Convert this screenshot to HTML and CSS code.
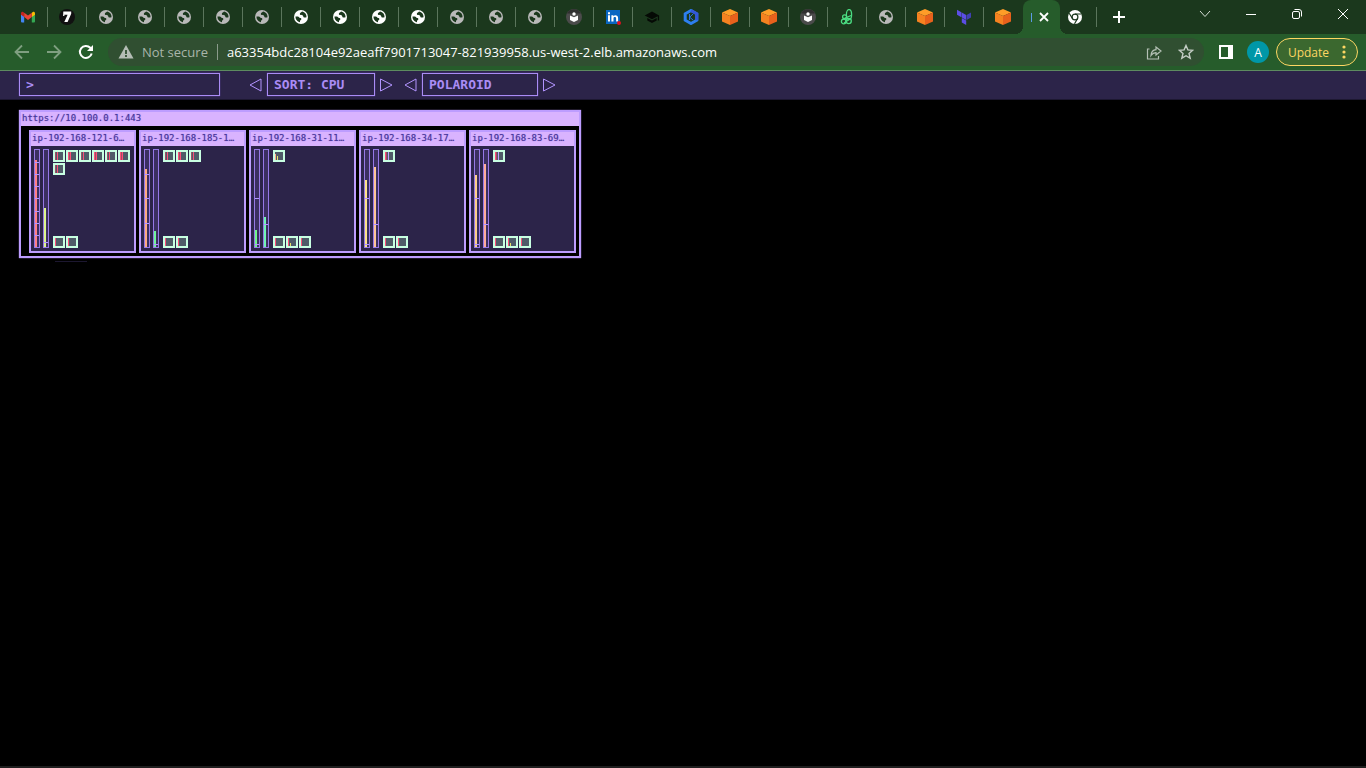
FILE: index.html
```html
<!DOCTYPE html>
<html lang="en">
<head>
<meta charset="utf-8">
<title>Kubernetes Operational View</title>
<link rel="stylesheet" href="styles.css">
</head>
<body>
<svg class="defs" aria-hidden="true">
  <symbol id="globe" viewBox="0 0 14 14"><circle cx="7" cy="7" r="7" fill="currentColor"/><path d="M1.500 6.600h2.200c1.400 0 1.500 1.500 2.300 1.500.9 0 1.500.4 1.300 1.300-.3.700-1.300.6-1.300 1.600v1.300C3.500 11.900 1.400 9.700 1.500 6.600zM8 1.600c-.2 1-2.200.9-2.200 2.300 0 1.200 1.700.8 2.700 1.300 1 .6.500 2 1.700 2.300 1 .3 1.300-.3 2.300-.3C12.700 4.300 10.700 2 8 1.600z" class="strip-fill"/></symbol>
  <symbol id="gmail" viewBox="0 0 14 11"><path d="M0 1.500V10q0 1 1 1h2.200V4.600z" fill="#4285f4"/><path d="M14 1.500V10q0 1-1 1h-2.200V4.600z" fill="#34a853"/><path d="M10.800 1.200 12.200.3Q14-.3 14 2v1.200l-3.200 2.400z" fill="#fbbc04"/><path d="M3.200 1.200 1.800.3Q0-.3 0 2v1.200l3.200 2.400z" fill="#c5221f"/><path d="M3.200 1.200 7 4.100l3.800-2.900v4.400L7 8.500 3.200 5.600z" fill="#ea4335"/></symbol>
  <symbol id="seven" viewBox="0 0 16 16"><circle cx="8" cy="8" r="8" fill="#111"/><path d="M4.300 2.500h7.900v2.200L8.600 13H5.300l3.300-7.300H5.400V7H4.100z" fill="#fff"/></symbol>
  <symbol id="reader" viewBox="0 0 16 16"><circle cx="8" cy="8" r="8" fill="#4b4b4b"/><path d="M1 4.500a8 8 0 0 1 14 0z" fill="#303030"/><circle cx="8" cy="5" r="1.700" fill="#fff"/><path d="M4 6.500 8 8.200l4-1.700V11l-4 2-4-2z" fill="#fff"/></symbol>
  <symbol id="linkedin" viewBox="0 0 16 16"><path d="M1 1h14v14H1z" fill="#0a66c2"/><path d="M3 6.300h2v6.200H3zM3 3.300h2v1.900H3zM6.400 6.300h2v.9c1.200-1.700 4.700-1.400 4.700 1.700v3.600h-2V9.400c0-2-2.600-1.900-2.600 0v3.100H6.400z" fill="#fff"/><circle cx="14" cy="14" r="2" fill="#e01020"/></symbol>
  <symbol id="cap" viewBox="0 0 16 16"><path d="M8 2.500.7 6.400 8 10.300l5.800-3.100v4.200h1.300v-5zM3.300 9v2.500L8 14l4.700-2.500V9L8 11.500z" fill="#050a05"/></symbol>
  <symbol id="kube" viewBox="0 0 16 16"><path d="m8 1.500 5.800 3.300v6.400L8 14.500l-5.800-3.300V4.800z" fill="none" stroke="#2d7ff0" stroke-width="3"/><path d="m8 1.500 5.800 3.300v6.400" fill="none" stroke="#3457d8" stroke-width="3"/><path d="M6.500 5v6M10 5 6.700 8.200 10 11" fill="none" stroke="#2d70e8"/></symbol>
  <symbol id="cube" viewBox="0 0 16 16"><path d="m8 0 8 3.500L8 7 0 3.500z" fill="#ff9d28"/><path d="M0 3.500 8 7v9l-8-3.500z" fill="#f58220"/><path d="M16 3.500 8 7v9l8-3.500z" fill="#e8611c"/></symbol>
  <symbol id="loops" viewBox="0 0 16 16"><g fill="none" stroke="#4bdc82" stroke-width="1.300"><ellipse cx="10" cy="5.600" rx="2.600" ry="5"/><circle cx="5.600" cy="7.800" r="2"/><circle cx="4.700" cy="12.500" r="2.300"/><circle cx="9.700" cy="12" r="2.600"/><path d="m4 10 8-3.500M5 14l6-4"/></g></symbol>
  <symbol id="terraform" viewBox="0 0 16 16"><path d="m1 .8 4.400 2.500v5L1 5.800zM5.800 3.600l4.400 2.500v5L5.800 8.600zM5.800 9.100l4.400 2.500v4.400l-4.400-2.500z" fill="#5c4ee5"/><path d="M15 3.600v5l-4.400 2.500v-5z" fill="#4040b2"/></symbol>
  <symbol id="chrome" viewBox="0 0 14 14"><circle cx="7" cy="7" r="7" fill="#fff"/><circle cx="7" cy="7" r="2.900" fill="none" stroke="#1b381d" stroke-width="1.200"/><path d="M7 4h6.300M4.400 8.500 1.200 3.300M9.600 8.500 6.500 13.800" stroke="#1b381d" stroke-width="1.200"/></symbol>
</svg>

<header class="browser">
  <nav class="tab-strip" id="tabs" aria-label="Tabs">
    <div class="tabs" id="tab-list"></div>
    <div class="active-tab"><span class="page-icon"></span><button aria-label="Close tab"><svg width="10" height="10" viewBox="0 0 10 10"><path d="m1 1 8 8M9 1 1 9" stroke="#fff" stroke-width="1.800"/></svg></button></div>
    <button class="tab last" aria-label="Chrome"><svg width="14" height="14"><use href="#chrome"/></svg></button>
    <button class="new-tab" aria-label="New tab"><svg width="12" height="12" viewBox="0 0 12 12"><path d="M6 0v12M0 6h12" stroke="#fff" stroke-width="2"/></svg></button>
    <div class="window-controls">
      <button aria-label="Search tabs"><svg width="12" height="12" viewBox="0 0 12 12"><path d="m1 3 5 5.500L11 3" fill="none" stroke="#d5ddd5"/></svg></button>
      <button aria-label="Minimize"><svg width="12" height="12" viewBox="0 0 12 12"><path d="M1 6.500h10" stroke="#fff"/></svg></button>
      <button aria-label="Restore"><svg width="12" height="12" viewBox="0 0 12 12"><g fill="none" stroke="#fff"><rect x="1.500" y="3.500" width="7" height="7" rx="1.500"/><path d="M3.500 1.500H8q2.500 0 2.500 2.500v4.500"/></g></svg></button>
      <button aria-label="Close"><svg width="12" height="12" viewBox="0 0 12 12"><path d="m1 1 10 10M11 1 1 11" stroke="#fff"/></svg></button>
    </div>
  </nav>
  <div class="toolbar">
    <button class="nav-button" aria-label="Back"><svg width="16" height="16" viewBox="0 0 16 16"><path d="M15 8H2M8 1.500 1.500 8 8 14.500" fill="none" stroke="#7f9f81" stroke-width="1.800"/></svg></button>
    <button class="nav-button" aria-label="Forward"><svg width="16" height="16" viewBox="0 0 16 16"><path d="M1 8h13M8 1.500 14.500 8 8 14.500" fill="none" stroke="#7f9f81" stroke-width="1.800"/></svg></button>
    <button class="nav-button" aria-label="Reload"><svg width="16" height="16" viewBox="0 0 16 16"><path d="M13.700 9.500A6 6 0 1 1 12.300 3.800L14 5.500" fill="none" stroke="#fff" stroke-width="2"/><path d="M15 1v6H9z" fill="#fff"/></svg></button>
    <div class="omnibox">
      <svg width="16" height="14" viewBox="0 0 16 14"><path d="M8 0 15.500 13.500H.5z" fill="#b4bdb5"/><path d="M8 5v4M8 10v2" stroke="#304f31" stroke-width="1.800"/></svg>
      <span class="security">Not secure</span>
      <input class="url" aria-label="Address" value="a63354bdc28104e92aeaff7901713047-821939958.us-west-2.elb.amazonaws.com">
      <button aria-label="Share"><svg width="16" height="16" viewBox="0 0 16 16"><path d="M3.500 5H1.500v10h11v-3M5 11.500c.3-4 2-5.500 5-5.800V3L15 7l-5 4V8.700c-2.200.1-3.700.9-5 2.800z" fill="none" stroke="#b4c0b5" stroke-width="1.200"/></svg></button>
      <button aria-label="Bookmark"><svg width="16" height="16" viewBox="0 0 16 16"><path d="m8 1.500 1.900 4.400 4.800.4L11 9.500l1.200 4.700L8 11.700l-4.200 2.500L5 9.500 1.300 6.300l4.800-.4z" fill="none" stroke="#c4cdc5" stroke-width="1.400"/></svg></button>
    </div>
    <button class="side-panel" aria-label="Side panel"><svg width="14" height="14" viewBox="0 0 14 14"><path d="M0 0h14v14H0zM2 2v10h7V2z" fill="#fff" fill-rule="evenodd"/></svg></button>
    <button class="avatar">A</button>
    <button class="update"><span>Update</span><svg width="4" height="14" viewBox="0 0 4 14"><g fill="#fdd663"><circle cx="2" cy="2" r="1.600"/><circle cx="2" cy="7" r="1.600"/><circle cx="2" cy="12" r="1.600"/></g></svg></button>
  </div>
</header>

<main>
  <div class="menu-bar">
    <input class="search" aria-label="Filter pods" value="&gt;">
    <div class="spinner">
      <button class="arrow" aria-label="Previous sort"><svg width="13" height="14" viewBox="0 0 13 14"><path d="M12 1v12L1 7z"/></svg></button>
      <button class="choice sort">SORT: CPU</button>
      <button class="arrow" aria-label="Next sort"><svg width="13" height="14" viewBox="0 0 13 14"><path d="M.5 1v12L12 7z"/></svg></button>
    </div>
    <div class="spinner">
      <button class="arrow" aria-label="Previous theme"><svg width="13" height="14" viewBox="0 0 13 14"><path d="M12 1v12L1 7z"/></svg></button>
      <button class="choice theme">POLAROID</button>
      <button class="arrow" aria-label="Next theme"><svg width="13" height="14" viewBox="0 0 13 14"><path d="M.5 1v12L12 7z"/></svg></button>
    </div>
  </div>
  <section class="cluster">
    <h1>https://10.100.0.1:443</h1>
    <div class="nodes" id="nodes"></div>
  </section>
  <div class="trace"></div>
</main>
<footer class="window-edge"></footer>
<script src="app.js"></script>
</body>
</html>
```
FILE: styles.css
```css
* { box-sizing: border-box; }
body {
  margin: 0;
  min-height: 100vh;
  display: flex;
  flex-direction: column;
  background: #000;
  font-family: "Open Sans", "Noto Sans", sans-serif;
}
button, input {
  margin: 0;
  padding: 0;
  border: 0;
  background: none;
  font: inherit;
  color: inherit;
}
button { display: flex; align-items: center; justify-content: center; }
.defs { position: absolute; width: 0; height: 0; }

.tab-strip { display: flex; height: 34px; padding-left: 9px; background: #1b381d; }
.strip-fill { fill: #1b381d; }
.tabs { display: flex; }
.tab { width: 39px; height: 20px; margin-top: 7px; border-right: 1px solid #5b755c; color: #b9b9b9; }
.tab.bright { color: #fff; }
.tabs .tab:last-child { border-color: transparent; }
.tab.last { width: 37px; padding-right: 7px; }
.active-tab {
  position: relative;
  display: flex;
  align-items: center;
  gap: 7px;
  width: 37px;
  padding-left: 8px;
  border-radius: 8px 8px 0 0;
  background: #265c2b;
}
.active-tab::before, .active-tab::after {
  content: "";
  position: absolute;
  bottom: 0;
  width: 8px;
  height: 8px;
}
.active-tab::before { right: 100%; background: radial-gradient(circle at 0 0, transparent 8px, #265c2b 8px); }
.active-tab::after { left: 100%; background: radial-gradient(circle at 100% 0, transparent 8px, #265c2b 8px); }
.page-icon { width: 1px; height: 9px; background: #5c9ae6; }
.new-tab { width: 44px; }
.window-controls { display: flex; margin-left: auto; height: 28px; }
.window-controls button { width: 46px; }

.toolbar {
  display: flex;
  align-items: center;
  height: 37px;
  padding: 0 8px 0 6px;
  border-bottom: 1px solid #5d8a60;
  background: #265c2b;
}
.nav-button { width: 32px; height: 32px; }
.omnibox {
  flex: 1;
  display: flex;
  align-items: center;
  height: 28px;
  margin: 0 11px 0 6px;
  padding: 0 10px;
  border-radius: 14px;
  background: #304f31;
  font-size: 13px;
}
.security { margin: 0 9px 0 8px; color: #a9b5aa; }
.url { flex: 1; height: 16px; padding-left: 9px; border-left: 1px solid #8b9b8c; color: #fff; }
.omnibox button { width: 16px; margin-left: 16px; }
.side-panel { width: 22px; height: 28px; }
.avatar { width: 22px; height: 22px; margin: 0 7px 0 10px; border-radius: 50%; background: #0097a7; color: #fff; font-size: 12px; }
.update {
  gap: 13px;
  width: 82px;
  height: 28px;
  border: 1px solid #fdd663;
  border-radius: 14px;
  background: #3b682f;
  color: #fdd663;
  font-size: 12px;
}

main { flex: 1; font-family: "DejaVu Sans Mono", monospace; }
.menu-bar {
  display: flex;
  align-items: center;
  height: 29px;
  padding: 0 19px 1px;
  border-bottom: 1px solid #1d1831;
  background: #2c2449;
  color: #aa8cf5;
  font-size: 13px;
  font-weight: 700;
  text-shadow: 0 0 2px #7455c8;
}
.search, .choice { height: 23px; padding: 0 6px; border: 1px solid #aa8cf5; box-shadow: 0 0 1px #7455c8; }
.search { width: 201px; margin-right: 29px; }
.choice { justify-content: flex-start; }
.sort { width: 108px; }
.theme { width: 116px; }
.spinner { display: flex; align-items: center; gap: 5px; margin-right: 11px; }
.arrow path { fill: none; stroke: #b294ff; }

.cluster {
  width: max-content;
  margin: 10px 0 0 19px;
  border: 2px solid #bd9dff;
  box-shadow: 0 0 1px #bd9dff;
}
h1, h2 {
  height: 14px;
  margin: 0;
  padding-left: 1px;
  overflow: hidden;
  background: #d9b3ff;
  color: #46369a;
  font-size: 9px;
  font-weight: 400;
  line-height: 13px;
  text-shadow: 0 0 1px #8468cc;
  white-space: nowrap;
}
.nodes { display: flex; gap: 3px; padding: 4px 3px 3px 8px; }
.node { width: 107px; border: 2px solid #bd9dff; background: #2c2449; }
.node-body { display: flex; gap: 3px; height: 105px; padding: 3px; }
.meter { position: relative; flex: none; width: 6px; height: 99px; border: 1px solid #9678e6; background: #3b2f60; }
.fill { position: absolute; left: 0; bottom: 0; width: 2px; }
.tick { position: absolute; left: 0; width: 4px; height: 1px; background: #b294ff; }
.pods { display: flex; flex-direction: column; justify-content: space-between; padding: 1px 0 0 1px; }
.pod-group { display: flex; flex-wrap: wrap; gap: 1px; width: 78px; }
.pod { display: flex; align-items: flex-end; width: 12px; height: 12px; border: 2px solid #c8ffe2; background: #4f5b68; }
.load { width: 1px; }
.trace { width: 32px; height: 1px; margin: 3px 0 0 55px; background: #1c1730; }
.window-edge { height: 2px; background: #1f1f1f; }
```
FILE: app.js
```js
const globes = (count, bright) => Array(count).fill(bright ? "globe bright" : "globe");
const tabs = [
  "gmail", "seven", ...globes(5), ...globes(4, true), ...globes(3),
  "reader", "linkedin", "cap", "kube", "cube", "cube", "reader", "loops",
  "globe", "cube", "terraform", "cube"
];
document.getElementById("tab-list").innerHTML = tabs.map(tab => {
  const [icon, bright] = tab.split(" ");
  const size = icon === "globe" || icon === "gmail" ? 14 : 16;
  return `<button class="tab ${bright || ""}" aria-label="${icon}"><svg width="${size}" height="${size}"><use href="#${icon}"/></svg></button>`;
}).join("");

// Meters: fill level, colour and tick offsets. Pods: load columns as [colour, height].
const red = ["#ff4f78", 8], dim = ["#a04f65", 8], pale = ["#b9a0ff", 8], gap = ["transparent", 0];
const low = [red], mid = [dim, gap, red], hot = [red, dim, red], duo = [red, dim, gap, pale];
const lively = [red, gap, ["#e6e36a", 3]];
const nodes = [
  { name: "ip-192-168-121-6…",
    meters: [[87, "#ff7f86", [12, 24, 36, 48, 61, 73, 85]], [39, "#dcf58c", [92]]],
    pods: [mid, hot, mid, hot, mid, hot, mid], system: [low, low] },
  { name: "ip-192-168-185-1…",
    meters: [[78, "#ffaa82", [24, 48, 73]], [16, "#70f59b", [94]]],
    pods: [mid, hot, mid], system: [low, low] },
  { name: "ip-192-168-31-11…",
    meters: [[17, "#70f58c", [48, 94]], [30, "#70f5b4", [74]]],
    pods: [[["#ffb080", 6], gap, ["#e6e36a", 4]]], system: [low, lively, low] },
  { name: "ip-192-168-34-17…",
    meters: [[67, "#ffe28a", [48, 94]], [80, "#ffc596", [74]]],
    pods: [duo], system: [low, low] },
  { name: "ip-192-168-83-69…",
    meters: [[72, "#ffcf8a", [48, 94]], [83, "#ffac9a", [74]]],
    pods: [duo], system: [low, lively, low] }
];

const meter = ([level, color, ticks]) => `<div class="meter"><div class="fill" style="height:${level}px;background:${color}"></div>${
  ticks.map(y => `<div class="tick" style="top:${y}px"></div>`).join("")}</div>`;
const group = pods => `<div class="pod-group">${pods.map(loads => `<div class="pod">${
  loads.map(([color, height]) => `<div class="load" style="height:${height}px;background:${color}"></div>`).join("")}</div>`).join("")}</div>`;

document.getElementById("nodes").innerHTML = nodes.map(node => `
  <article class="node"><h2>${node.name}</h2><div class="node-body">
    ${node.meters.map(meter).join("")}
    <div class="pods">${group(node.pods)}${group(node.system)}</div>
  </div></article>`).join("");
```
